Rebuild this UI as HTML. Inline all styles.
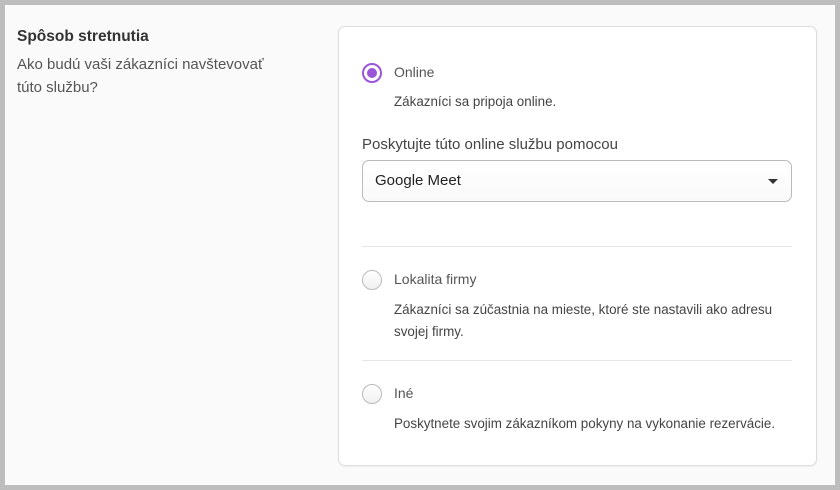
<!DOCTYPE html>
<html><head><meta charset="utf-8"><style>
*{box-sizing:border-box;margin:0;padding:0}
html,body{width:840px;height:490px;overflow:hidden;background:#bdbdbd;font-family:"Liberation Sans",sans-serif}
.frame{position:absolute;left:5px;top:5px;width:830px;height:480px;background:#fafafa}
.h{position:absolute;left:17px;top:28px;font-size:15.5px;font-weight:bold;color:#333}
.sub{position:absolute;left:17px;top:53px;font-size:15px;line-height:23px;color:#555;width:270px}
.card{position:absolute;left:338px;top:26px;width:479px;height:440px;background:#fff;border:1px solid #ddd;border-radius:7px;box-shadow:0 1px 2px rgba(0,0,0,.05)}
.radio{position:absolute;left:23px;width:20px;height:20px;border-radius:50%;border:1px solid #bbb;background:linear-gradient(#fff,#f0f0f0)}
.radio.on{border:2px solid #9a56d8;background:#fff}
.radio.on::after{content:"";position:absolute;left:3px;top:3px;width:10px;height:10px;border-radius:50%;background:#9a56d8}
.lab{position:absolute;left:55px;font-size:14px;color:#555}
.desc{position:absolute;left:55px;font-size:13.4px;color:#444;line-height:22px;width:395px}
.sel{position:absolute;left:23px;top:133px;width:430px;height:42px;border:1px solid #bbb;border-radius:7px;background:linear-gradient(#fff,#f9f9f9)}
.sel span{position:absolute;left:12px;top:11px;font-size:15px;color:#222}
.sel i{position:absolute;right:13px;top:18px;border-left:5px solid transparent;border-right:5px solid transparent;border-top:5px solid #333}
.hr{position:absolute;left:23px;width:430px;height:1px;background:#e6e6e6}
</style></head><body>
<div class="frame"></div>
<div class="h">Spôsob stretnutia</div>
<div class="sub">Ako budú vaši zákazníci navštevovať túto službu?</div>
<div class="card">
 <div class="radio on" style="top:36px"></div>
 <div class="lab" style="top:37px">Online</div>
 <div class="desc" style="top:64px">Zákazníci sa pripoja online.</div>
 <div class="lab" style="left:23px;top:109px;font-size:15px;color:#444">Poskytujte túto online službu pomocou</div>
 <div class="sel"><span>Google Meet</span><i></i></div>
 <div class="hr" style="top:219px"></div>
 <div class="radio" style="top:243px"></div>
 <div class="lab" style="top:244px">Lokalita firmy</div>
 <div class="desc" style="top:272px">Zákazníci sa zúčastnia na mieste, ktoré ste nastavili ako adresu svojej firmy.</div>
 <div class="hr" style="top:333px"></div>
 <div class="radio" style="top:357px"></div>
 <div class="lab" style="top:358px">Iné</div>
 <div class="desc" style="top:386px">Poskytnete svojim zákazníkom pokyny na vykonanie rezervácie.</div>
</div>
</body></html>
